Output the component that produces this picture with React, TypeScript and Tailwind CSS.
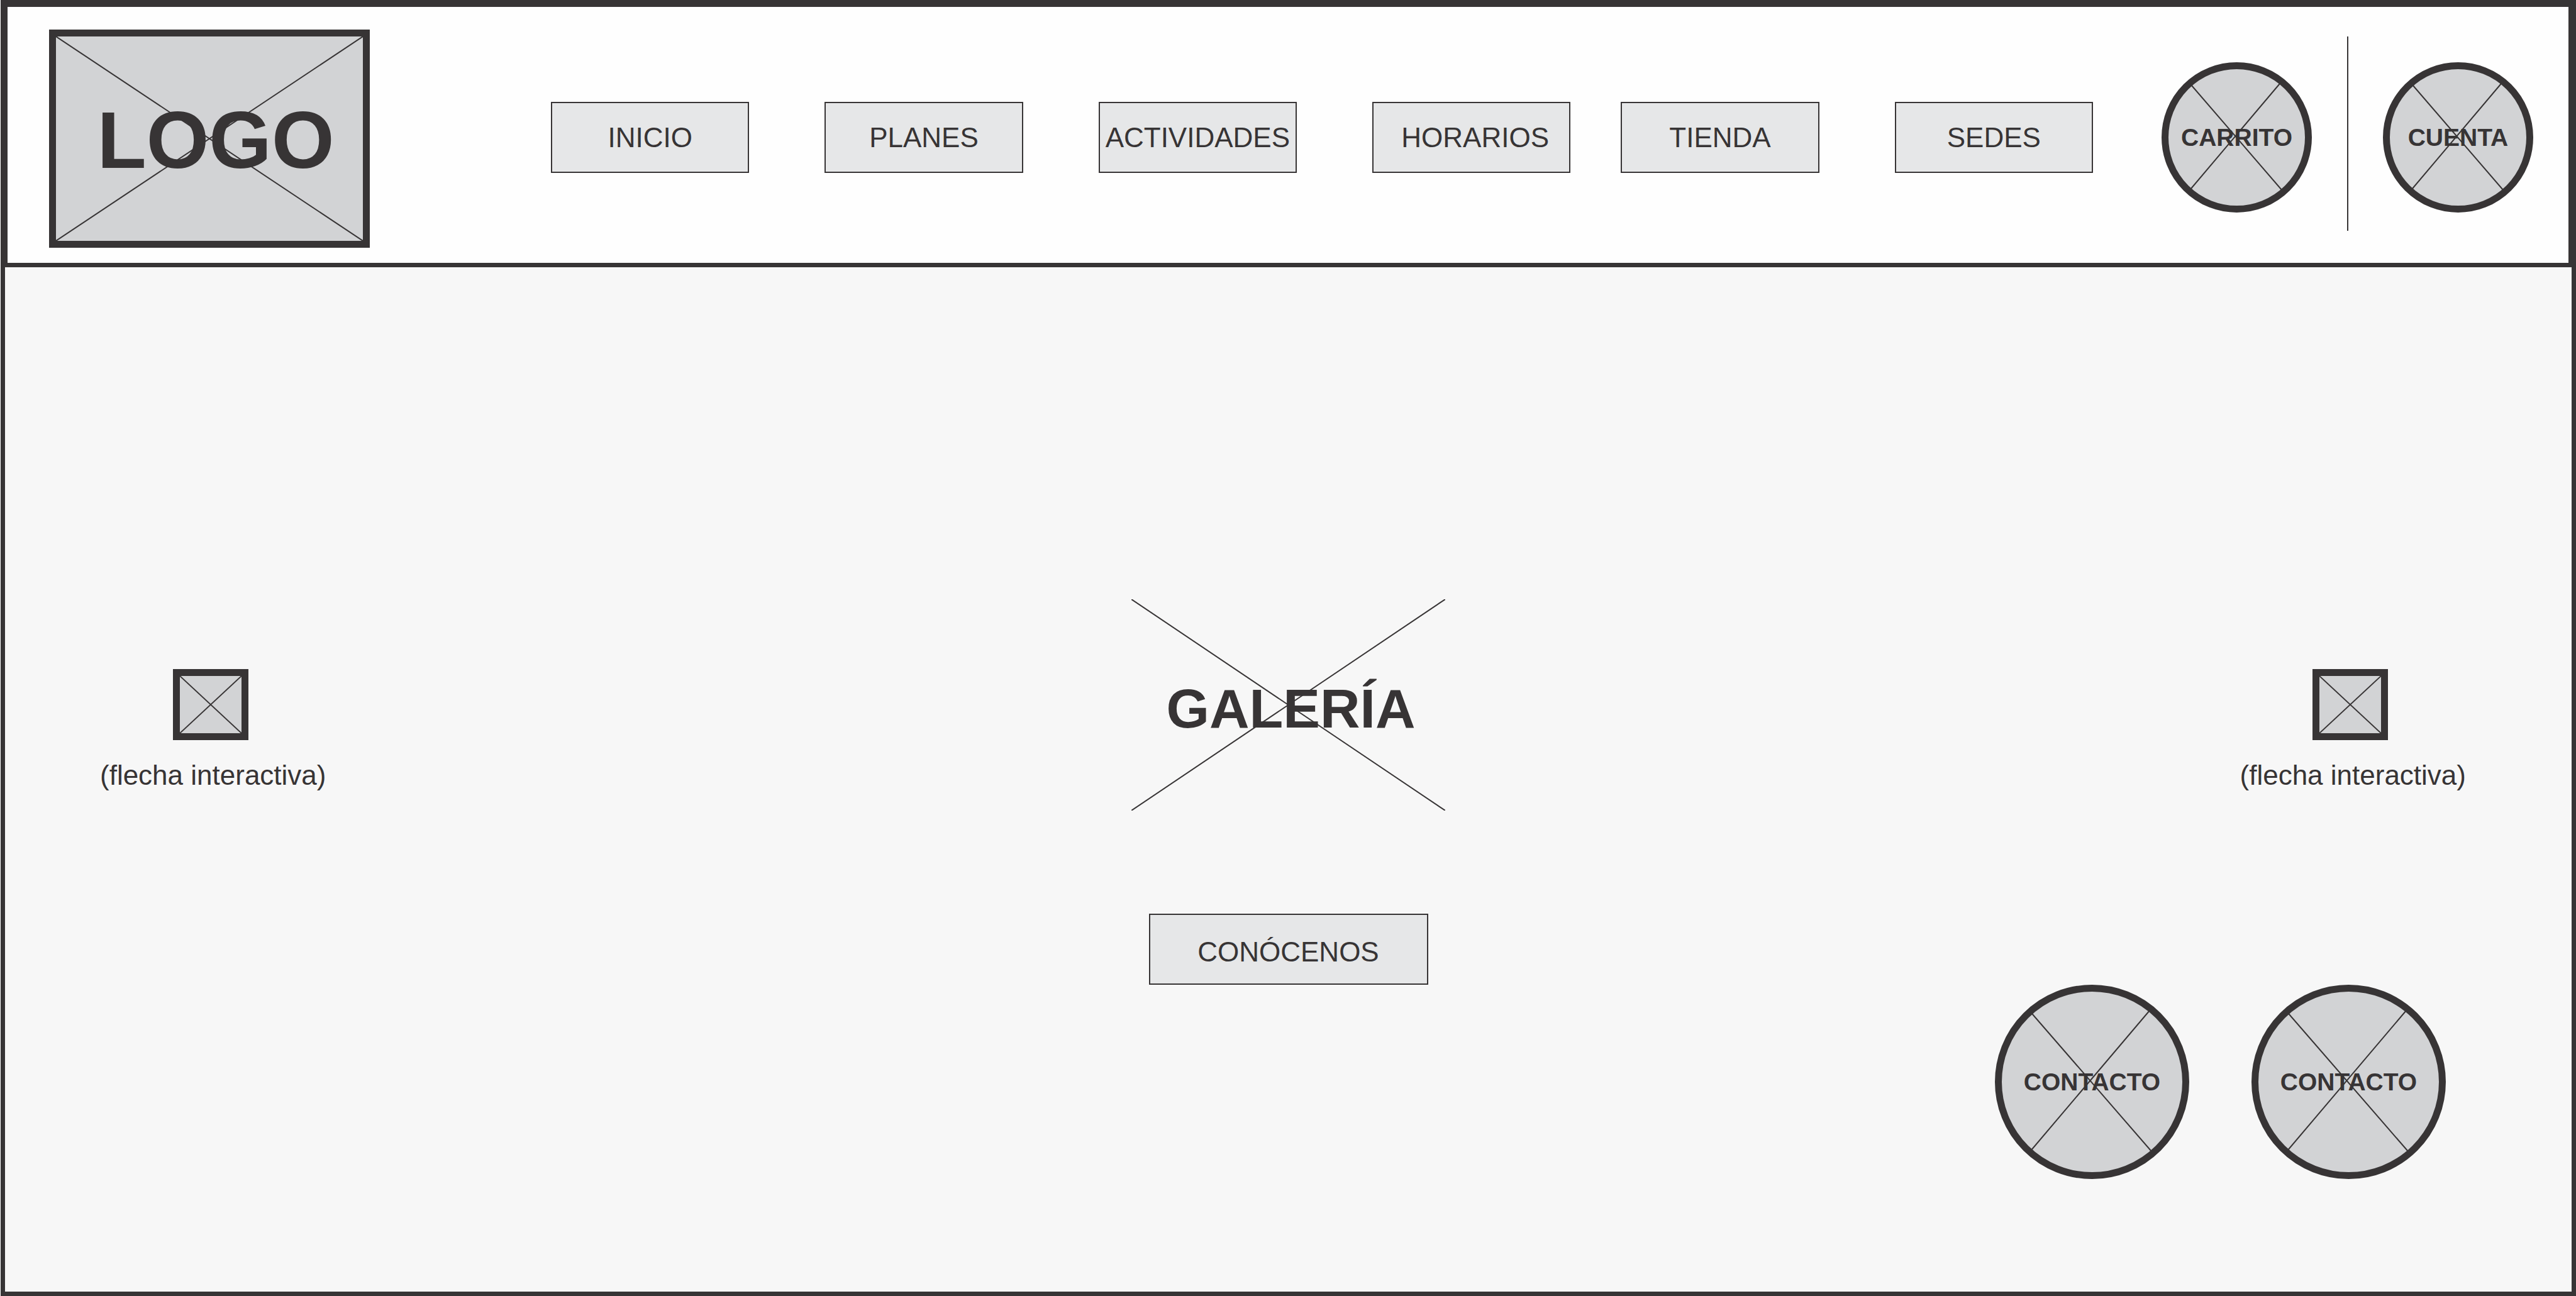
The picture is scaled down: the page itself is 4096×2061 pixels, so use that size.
import type { ReactNode } from "react";

const navItems = [
  { label: "INICIO", spacing: "", inner: "" },
  { label: "PLANES", spacing: "ml-[120px]", inner: "" },
  { label: "ACTIVIDADES", spacing: "ml-[120px]", inner: "" },
  { label: "HORARIOS", spacing: "ml-[120px]", inner: "pl-3" },
  { label: "TIENDA", spacing: "ml-20", inner: "" },
  { label: "SEDES", spacing: "ml-[120px]", inner: "" },
];

/* Diagonals from corner to corner of the nearest positioned box. */
function Cross() {
  return (
    <svg
      className="absolute inset-0 h-full w-full stroke-[#373435] stroke-2"
      aria-hidden="true"
    >
      <line x1="0" y1="0" x2="100%" y2="100%" />
      <line x1="100%" y1="0" x2="0" y2="100%" />
    </svg>
  );
}

function SmallDisc({ children }: { children: ReactNode }) {
  return (
    <span className="relative flex size-[239px] items-center justify-center">
      <svg
        viewBox="0 0 239 239"
        className="absolute inset-0 h-full w-full stroke-[#373435]"
        aria-hidden="true"
      >
        <circle cx="119.5" cy="119.5" r="114" fill="#D2D3D5" stroke="none" />
        <path d="M47 36L191 203M188 34L46 202" strokeWidth="2" fill="none" />
        <circle cx="119.5" cy="119.5" r="114" fill="none" strokeWidth="11" />
      </svg>
      <span className="relative">{children}</span>
    </span>
  );
}

function LargeDisc({ children }: { children: ReactNode }) {
  return (
    <span className="relative flex size-[309px] items-center justify-center">
      <svg
        viewBox="0 0 309 309"
        className="absolute inset-0 h-full w-full stroke-[#373435]"
        aria-hidden="true"
      >
        <circle cx="154.5" cy="154.5" r="149" fill="#D2D3D5" stroke="none" />
        <path d="M59 46L249 265M246 41L57 264" strokeWidth="2" fill="none" />
        <circle cx="154.5" cy="154.5" r="149" fill="none" strokeWidth="11" />
      </svg>
      <span className="relative">{children}</span>
    </span>
  );
}

function ArrowButton({ name }: { name: string }) {
  return (
    <button
      type="button"
      title={name}
      className="mt-[111px] flex flex-col items-center gap-[34px] text-[44px] leading-[44px]"
    >
      <span className="pr-2">
        <span className="relative block h-[113px] w-[120px] border-[11px] border-[#373435] bg-[#D2D3D5]">
          <Cross />
        </span>
      </span>
      <span className="whitespace-nowrap">(flecha interactiva)</span>
    </button>
  );
}

export default function App() {
  return (
    <div className="ml-px flex min-h-screen flex-col border-x-[7px] border-b-[7px] border-[#373435] bg-[#F7F7F7] font-['Liberation_Sans',Arial,sans-serif] text-[#373435]">
      <header className="flex items-start border-t-[11px] border-r-[5px] border-b-[7px] border-l-4 border-[#373435] bg-[#FEFEFE] pt-9 pr-14 pb-6 pl-[66px]">
        <a
          href="#inicio"
          className="relative flex h-[347px] w-[510px] shrink-0 items-center justify-center border-[11px] border-[#373435] bg-[#D2D3D5] pt-1 pl-5 text-[128px] leading-none font-bold"
        >
          <Cross />
          <span className="relative">LOGO</span>
        </a>

        <nav className="mt-[115px] mr-[109px] ml-[288px] flex-1">
          <ul className="flex">
            {navItems.map((item) => (
              <li key={item.label} className={`min-w-0 flex-1 ${item.spacing}`}>
                <a
                  href={`#${item.label.toLowerCase()}`}
                  className={`flex h-[113px] items-center justify-center border-2 border-[#373435] bg-[#E6E7E8] text-[44px] leading-[44px] ${item.inner}`}
                >
                  {item.label}
                </a>
              </li>
            ))}
          </ul>
        </nav>

        <button type="button" className="mt-[52px] text-[39px] leading-[44px] font-bold">
          <SmallDisc>CARRITO</SmallDisc>
        </button>
        <div className="mr-[55px] ml-14 mt-[11px] h-[309px] w-[2px] bg-[#373435]" />
        <button type="button" className="mt-[52px] text-[39px] leading-[44px] font-bold">
          <SmallDisc>CUENTA</SmallDisc>
        </button>
      </header>

      <main className="flex-1">
        <section className="grid grid-cols-[1fr_auto_1fr] items-start pt-[528px]">
          <div className="flex justify-start pl-[151px]">
            <ArrowButton name="Anterior" />
          </div>
          <div className="flex flex-col items-center">
            <div className="relative flex h-[336px] w-[499px] items-center justify-center pt-3 pl-2">
              <Cross />
              <h1 className="relative text-[88px] leading-none font-bold">GALERÍA</h1>
            </div>
            <button
              type="button"
              className="mt-[164px] flex h-[113px] w-[444px] items-center justify-center border-2 border-[#373435] bg-[#E6E7E8] pt-2 text-[44px] leading-[44px]"
            >
              CONÓCENOS
            </button>
          </div>
          <div className="flex justify-end pr-[168px]">
            <ArrowButton name="Siguiente" />
          </div>
        </section>

        <section className="flex justify-end gap-[99px] pr-[200px] text-[39px] leading-[44px] font-bold">
          <a href="#contacto">
            <LargeDisc>CONTACTO</LargeDisc>
          </a>
          <a href="#contacto">
            <LargeDisc>CONTACTO</LargeDisc>
          </a>
        </section>
      </main>
    </div>
  );
}
